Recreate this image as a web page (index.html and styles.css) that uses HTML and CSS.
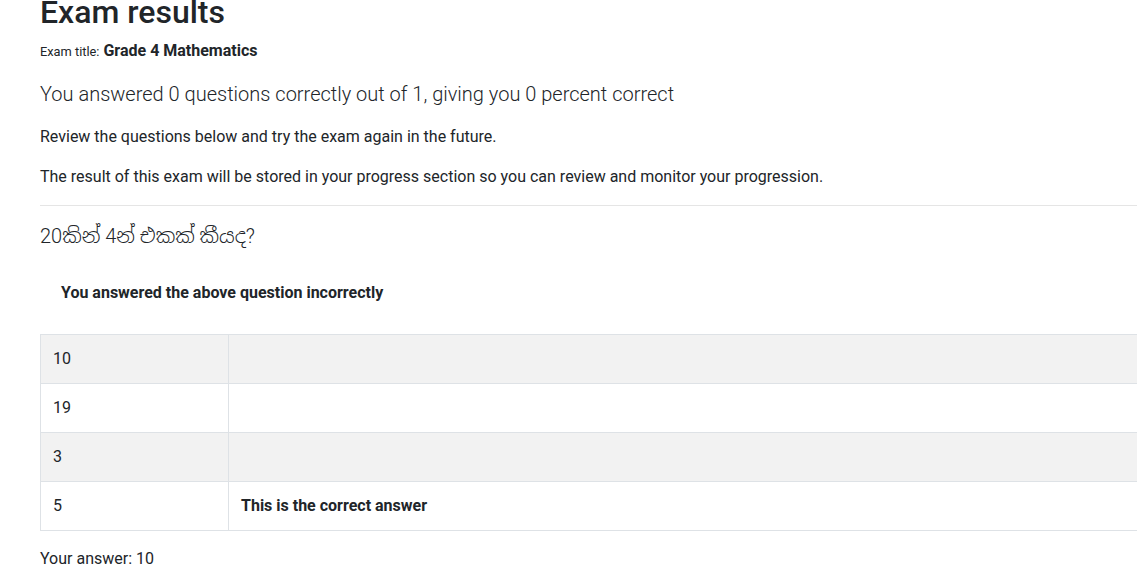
FILE: index.html
```html
<!DOCTYPE html>
<html lang="en">
<head>
<meta charset="utf-8">
<title>Exam results</title>
<link rel="stylesheet" href="styles.css">
</head>
<body>
<main class="page">
  <h2 class="title">Exam results</h2>
  <p class="exam-title"><small class="label">Exam title:</small> <strong>Grade 4 Mathematics</strong></p>
  <p class="lead">You answered 0 questions correctly out of 1, giving you 0 percent correct</p>
  <p>Review the questions below and try the exam again in the future.</p>
  <p>The result of this exam will be stored in your progress section so you can review and monitor your progression.</p>
  <hr class="rule">
  <section class="question">
    <h4 class="question-text">20කින් 4න් එකක් කීයද?</h4>
    <div class="alert"><strong>You answered the above question incorrectly</strong></div>
    <table class="answers">
      <tbody>
        <tr><td class="opt">10</td><td></td></tr>
        <tr><td class="opt">19</td><td></td></tr>
        <tr><td class="opt">3</td><td></td></tr>
        <tr><td class="opt">5</td><td><strong>This is the correct answer</strong></td></tr>
      </tbody>
    </table>
    <p class="your-answer">Your answer: 10</p>
  </section>
</main>
</body>
</html>
```

FILE: styles.css
```css
html, body {
  margin: 0;
  padding: 0;
  overflow: hidden;
  background: #fff;
}
body {
  font-family: Roboto, "Noto Sans Sinhala", "Noto Sans", sans-serif;
  font-size: 16px;
  line-height: 1.5;
  color: #212529;
}
.page {
  width: 1120px;
  margin-left: 40px;
}
.title {
  font-size: 32px;
  font-weight: 500;
  line-height: 1.2;
  margin: -7px 0 8px;
}
p {
  margin: 0 0 16px;
}
.exam-title {
  margin-bottom: 16px;
}
.label {
  font-size: 12.8px;
}
.lead {
  font-size: 20px;
  font-weight: 300;
  margin-bottom: 16px;
}
.rule {
  border: 0;
  border-top: 1px solid rgba(0, 0, 0, 0.1);
  margin: 16px 0 18px;
}
.question-text {
  font-size: 20px;
  font-weight: 300;
  line-height: 1.2;
  margin: 0 0 20px;
}
.alert {
  padding: 12px 20px;
  border: 1px solid transparent;
  margin: 0 0 16px;
}
.answers {
  width: 100%;
  border-collapse: collapse;
  margin-bottom: 16px;
}
.answers td {
  border: 1px solid #dee2e6;
  padding: 12px;
  vertical-align: top;
  height: 24px;
}
.answers td.opt {
  width: 163px;
}
.answers tr:nth-child(odd) td {
  background: rgba(0, 0, 0, 0.05);
}
.your-answer {
  margin: 0;
}
```
